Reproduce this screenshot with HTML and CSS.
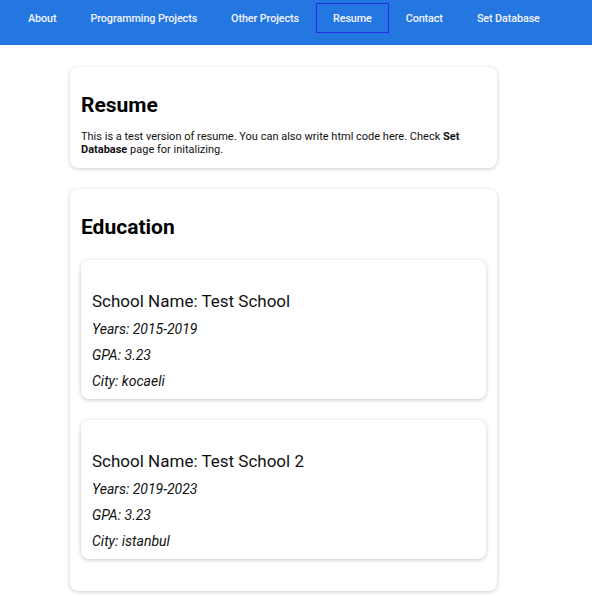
FILE: index.html
```html
<!DOCTYPE html>
<html>
<head>
<meta charset="utf-8">
<link rel="stylesheet" href="styles.css">
</head>
<body>
<nav class="navbar">
  <ul class="nav-list">
    <li class="nav-item">About</li>
    <li class="nav-item">Programming Projects</li>
    <li class="nav-item">Other Projects</li>
    <li class="nav-item active">Resume</li>
    <li class="nav-item">Contact</li>
    <li class="nav-item">Set Database</li>
  </ul>
</nav>
<main class="content">
  <section class="card">
    <h2 class="card-title">Resume</h2>
    <p class="intro">This is a test version of resume. You can also write html code here. Check <b>Set Database</b> page for initalizing.</p>
  </section>
  <section class="card">
    <h2 class="card-title">Education</h2>
    <div class="school first">
      <h3 class="school-name">School Name: Test School</h3>
      <p class="detail">Years: 2015-2019</p>
      <p class="detail">GPA: 3.23</p>
      <p class="detail">City: kocaeli</p>
    </div>
    <div class="school">
      <h3 class="school-name">School Name: Test School 2</h3>
      <p class="detail">Years: 2019-2023</p>
      <p class="detail">GPA: 3.23</p>
      <p class="detail">City: istanbul</p>
    </div>
  </section>
</main>
</body>
</html>
```

FILE: styles.css
```css
html, body {
  margin: 0;
  padding: 0;
  background: #ffffff;
  font-family: Roboto, "Liberation Sans", Arial, sans-serif;
  color: #000;
}

.navbar {
  background: #2477e0;
  height: 45px;
  box-sizing: border-box;
  padding-top: 3px;
}

.nav-list {
  list-style: none;
  margin: 0;
  padding: 0 0 0 11px;
  display: flex;
}

.nav-item {
  height: 30px;
  box-sizing: border-box;
  display: flex;
  align-items: center;
  padding: 0 16px;
  border: 1px solid transparent;
  color: #f4f4ff;
  font-size: 10.8px;
  font-weight: 500;
  letter-spacing: -0.1px;
}

.nav-item.active {
  border-color: #2530e6;
}

.content {
  padding: 22px 0 20px 70px;
  display: flex;
  flex-direction: column;
  gap: 21px;
}

.card {
  width: 427px;
  box-sizing: border-box;
  background: #fff;
  border-radius: 8px;
  box-shadow: 0 1px 4px rgba(0, 0, 0, 0.2);
  padding: 0 11px 11px;
}

.card-title {
  margin: 26px 0 0;
  font-size: 21px;
  line-height: 25px;
  font-weight: 700;
}

.intro {
  margin: 11.5px 0 0;
  font-size: 11px;
  line-height: 13.5px;
  color: #111;
}

.intro b {
  font-weight: 700;
}

.school {
  margin-top: 21px;
  margin-bottom: 21px;
  border-radius: 8px;
  box-shadow: 0 1px 4px rgba(0, 0, 0, 0.22);
  padding: 31px 11px 5px;
}

.school.first {
  margin-top: 20px;
}

.school-name {
  margin: 0 0 5px;
  font-size: 17px;
  line-height: 20px;
  font-weight: 400;
  color: #111;
}

.detail {
  margin: 0;
  font-size: 14px;
  line-height: 26px;
  font-style: italic;
  color: #111;
}
```
